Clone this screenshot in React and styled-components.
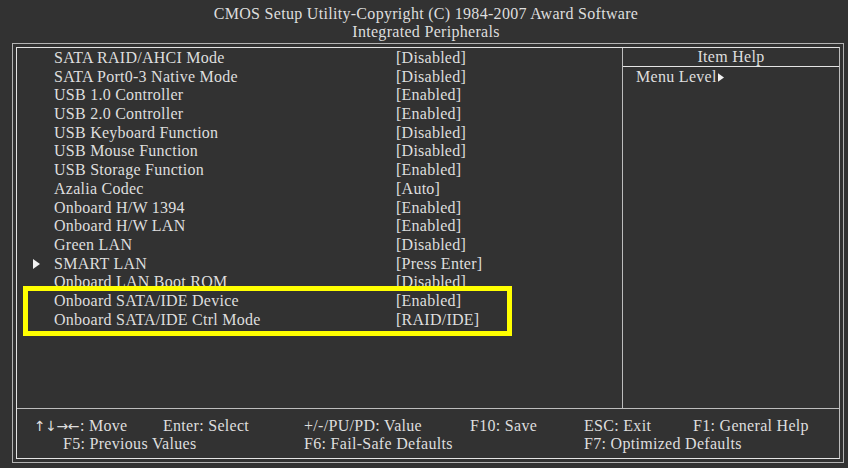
import React from "react";
import styled, { createGlobalStyle } from "styled-components";

const Global = createGlobalStyle`
  html, body { margin: 0; padding: 0; background: #323232; }
  body {
    font-family: "Liberation Serif", "Times New Roman", serif;
    color: #dedede;
    font-size: 16px;
  }
`;

const Screen = styled.div`
  width: 848px;
  height: 468px;
  overflow: hidden;
  background: #323232;
  display: flex;
  flex-direction: column;
`;

const Header = styled.div`
  box-sizing: border-box;
  height: 43px;
  padding-top: 5px;
  text-align: center;
  line-height: 18px;
  letter-spacing: 0.3px;
  padding-left: 4px;
`;

const OuterFrame = styled.div`
  box-sizing: border-box;
  margin-left: 12px;
  width: 832px;
  height: 420px;
  border: 1px solid #b4b4b4;
  padding: 3px;
`;

const InnerFrame = styled.div`
  box-sizing: border-box;
  height: 100%;
  border: 1px solid #e4e4e4;
  border-right-color: #bdbdbd;
  display: grid;
  grid-template-rows: 361px 1fr;
`;

const Main = styled.div`
  display: grid;
  grid-template-columns: 606px 1fr;
  border-bottom: 1px solid #bdbdbd;
`;

const ListColumn = styled.div`
  position: relative;
  border-right: 1px solid #bdbdbd;
  padding-top: 1px;
`;

const Row = styled.div`
  display: grid;
  grid-template-columns: 37px 342px 1fr;
  height: 18.7px;
  line-height: 18.7px;
  letter-spacing: 0.25px;
  white-space: nowrap;
`;

const Marker = styled.div`
  display: flex;
  align-items: center;
  padding-left: 16px;
`;

const Highlight = styled.div`
  position: absolute;
  box-sizing: border-box;
  left: 6px;
  top: 238px;
  width: 489px;
  height: 50px;
  border: 5px solid #ffff00;
`;

const HelpColumn = styled.div`
  display: flex;
  flex-direction: column;
`;

const HelpTitle = styled.div`
  height: 18px;
  line-height: 18px;
  text-align: center;
  border-bottom: 1px solid #e4e4e4;
  letter-spacing: 0.3px;
`;

const HelpBody = styled.div`
  padding: 1px 0 0 13px;
  line-height: 18px;
  display: flex;
  align-items: center;
  letter-spacing: 0.3px;
`;

const Footer = styled.div`
  padding: 8px 0 0 17px;
  display: grid;
  grid-template-columns: 129px 141px 166px 114px 109px 1fr;
  grid-auto-rows: 18px;
  line-height: 18px;
  white-space: nowrap;
  letter-spacing: 0.3px;
`;

const FootItem = styled.div`
  grid-column: ${(p) => p.$col} / span ${(p) => p.$span || 1};
  padding-left: ${(p) => p.$indent || 0}px;
`;

const Arrows = styled.span`
  font-family: "DejaVu Sans", sans-serif;
  font-size: 14px;
  letter-spacing: -0.5px;
  margin-right: 1px;
`;

const Tri = ({ size = 7, style }) => (
  <svg width={size} height={size + 3} viewBox="0 0 7 10" style={style}>
    <polygon points="0,0 7,5 0,10" fill="#f2f2f2" />
  </svg>
);

const items = [
  ["SATA RAID/AHCI Mode", "[Disabled]"],
  ["SATA Port0-3 Native Mode", "[Disabled]"],
  ["USB 1.0 Controller", "[Enabled]"],
  ["USB 2.0 Controller", "[Enabled]"],
  ["USB Keyboard Function", "[Disabled]"],
  ["USB Mouse Function", "[Disabled]"],
  ["USB Storage Function", "[Enabled]"],
  ["Azalia Codec", "[Auto]"],
  ["Onboard H/W 1394", "[Enabled]"],
  ["Onboard H/W LAN", "[Enabled]"],
  ["Green LAN", "[Disabled]"],
  ["SMART LAN", "[Press Enter]", true],
  ["Onboard LAN Boot ROM", "[Disabled]"],
  ["Onboard SATA/IDE Device", "[Enabled]"],
  ["Onboard SATA/IDE Ctrl Mode", "[RAID/IDE]"],
];

export default function App() {
  return (
    <Screen>
      <Global />
      <Header>
        <div>CMOS Setup Utility-Copyright (C) 1984-2007 Award Software</div>
        <div>Integrated Peripherals</div>
      </Header>
      <OuterFrame>
        <InnerFrame>
          <Main>
            <ListColumn>
              {items.map(([label, value, sub]) => (
                <Row key={label}>
                  <Marker>{sub && <Tri />}</Marker>
                  <span>{label}</span>
                  <span>{value}</span>
                </Row>
              ))}
              <Highlight />
            </ListColumn>
            <HelpColumn>
              <HelpTitle>Item Help</HelpTitle>
              <HelpBody>
                Menu Level
                <Tri size={6} style={{ marginLeft: 1 }} />
              </HelpBody>
            </HelpColumn>
          </Main>
          <Footer>
            <FootItem $col={1}>
              <Arrows>↑↓→←</Arrows>: Move
            </FootItem>
            <FootItem $col={2}>Enter: Select</FootItem>
            <FootItem $col={3}>+/-/PU/PD: Value</FootItem>
            <FootItem $col={4}>F10: Save</FootItem>
            <FootItem $col={5}>ESC: Exit</FootItem>
            <FootItem $col={6}>F1: General Help</FootItem>
            <FootItem $col={1} $span={2} $indent={29}>F5: Previous Values</FootItem>
            <FootItem $col={3} $span={2}>F6: Fail-Safe Defaults</FootItem>
            <FootItem $col={5} $span={2}>F7: Optimized Defaults</FootItem>
          </Footer>
        </InnerFrame>
      </OuterFrame>
    </Screen>
  );
}
